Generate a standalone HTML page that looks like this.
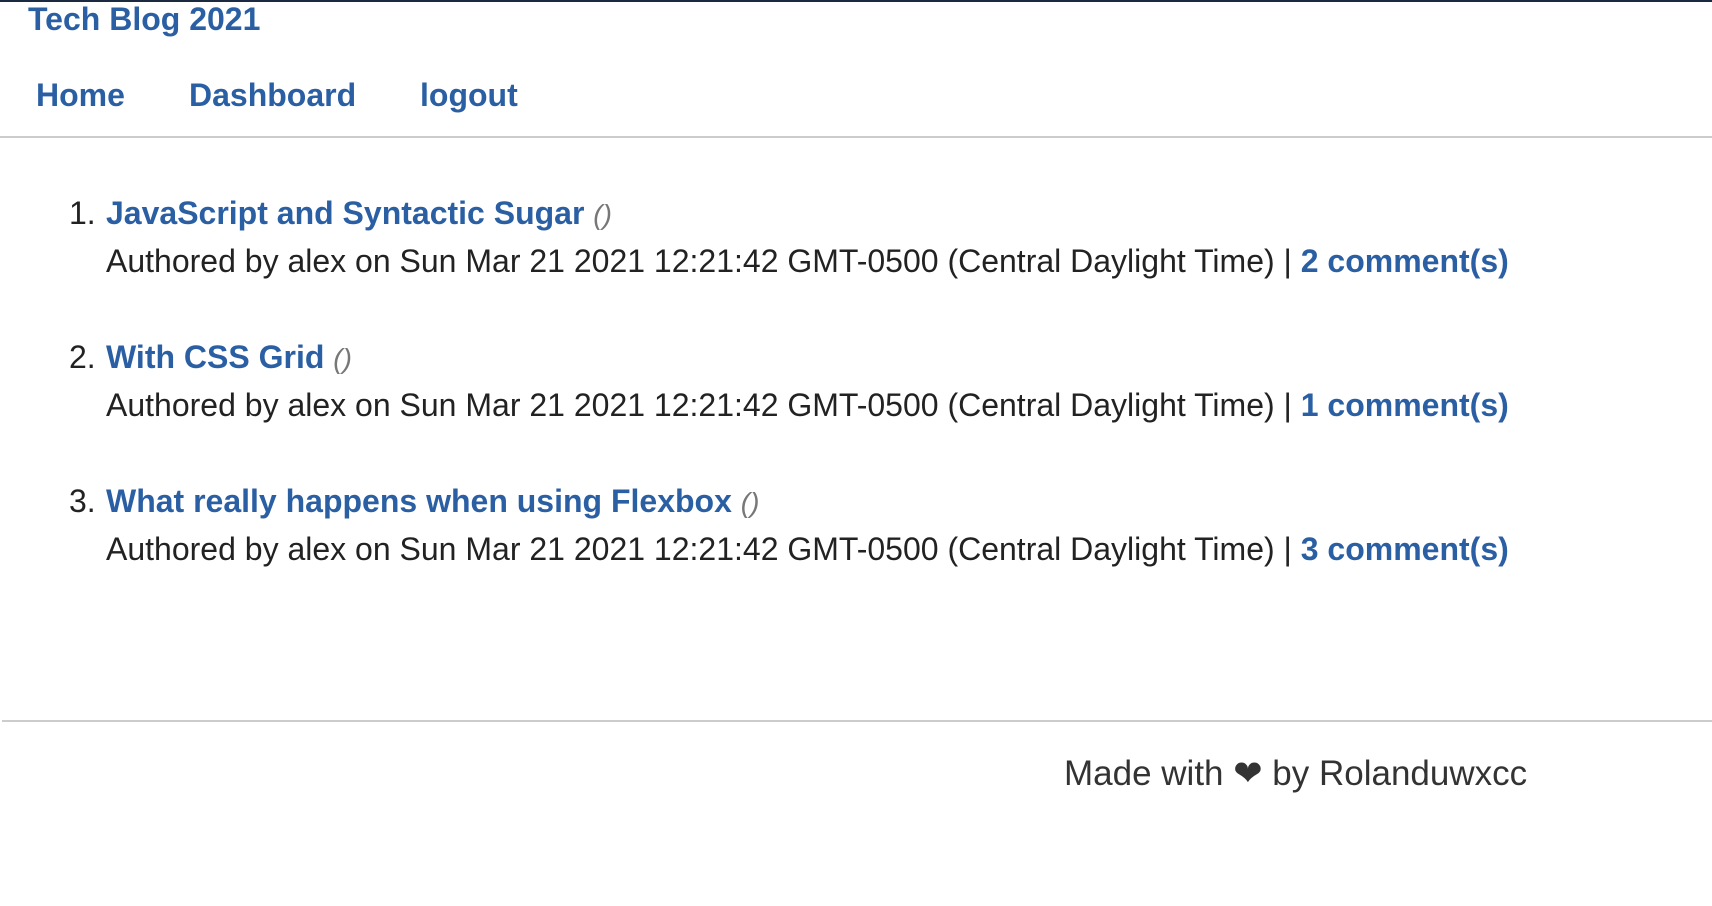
<!DOCTYPE html>
<html><head><style>
body{margin:0;width:1712px;height:906px;background:#fff;font-family:"Liberation Sans",Arial,sans-serif;position:relative;overflow:hidden;color:#222}
a{color:#2a5fa3;text-decoration:none;font-weight:bold}
.top{position:absolute;left:0;top:0;width:1712px;height:2px;background:#1b2a40}
.t{position:absolute;left:28px;top:1px;font-size:32px;line-height:36px}
.nav{position:absolute;top:77px;font-size:32px;line-height:36px}
.hr1{position:absolute;left:0;top:136px;width:1712px;height:2px;background:#ccc}
.it{position:absolute;left:0;font-size:32px;line-height:48px}
.it .n{position:absolute;left:69px;top:0}
.it .a{position:absolute;left:106px;top:0;white-space:nowrap}
.it .b{position:absolute;left:106px;top:48px;white-space:nowrap}
.it i{color:#777;font-size:28px}
.hr2{position:absolute;left:2px;top:720px;width:1710px;height:2px;background:#ccc}
.f{position:absolute;left:1064px;top:752px;font-size:35px;line-height:44px;color:#333;white-space:nowrap}
</style></head><body>
<div class="top"></div>
<a class="t">Tech Blog 2021</a>
<a class="nav" style="left:36px">Home</a>
<a class="nav" style="left:189px">Dashboard</a>
<a class="nav" style="left:420px">logout</a>
<div class="hr1"></div>
<div class="it" style="top:189px"><span class="n">1.</span><span class="a"><a>JavaScript and Syntactic Sugar</a> <i>()</i></span><span class="b">Authored by alex on Sun Mar 21 2021 12:21:42 GMT-0500 (Central Daylight Time) | <a>2 comment(s)</a></span></div>
<div class="it" style="top:333px"><span class="n">2.</span><span class="a"><a>With CSS Grid</a> <i>()</i></span><span class="b">Authored by alex on Sun Mar 21 2021 12:21:42 GMT-0500 (Central Daylight Time) | <a>1 comment(s)</a></span></div>
<div class="it" style="top:477px"><span class="n">3.</span><span class="a"><a>What really happens when using Flexbox</a> <i>()</i></span><span class="b">Authored by alex on Sun Mar 21 2021 12:21:42 GMT-0500 (Central Daylight Time) | <a>3 comment(s)</a></span></div>
<div class="hr2"></div>
<div class="f">Made with ❤ by Rolanduwxcc</div>
</body></html>
